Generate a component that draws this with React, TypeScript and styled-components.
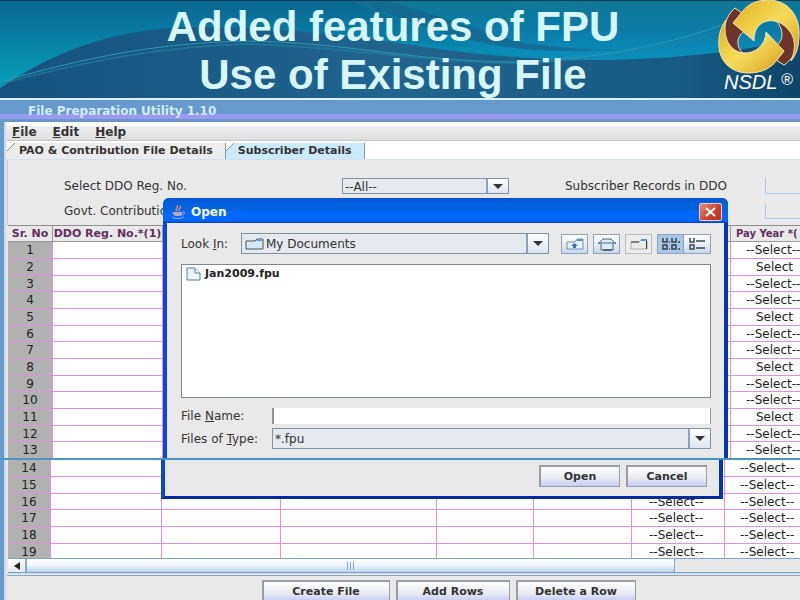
import React from 'react';
import styled, { createGlobalStyle, css } from 'styled-components';

const GlobalStyle = createGlobalStyle`
  *, *::before, *::after { box-sizing: border-box; }
  body { margin: 0; background: #e9e9e9; }
  button, input, select { font: inherit; color: inherit; }
`;

const uiFont = '"DejaVu Sans", sans-serif';

const Page = styled.div`
  height: 100vh;
  display: flex;
  flex-direction: column;
  overflow: hidden;
  background: #e9e9e9;
  color: #333;
  font: 12px/14px ${uiFont};
`;

/* ---------- Slide header ---------- */

const Banner = styled.header`
  display: grid;
  flex: none;
  height: 100px;
  overflow: hidden;
  border-bottom: 2px solid #d9f2fb;
  background: #1b5f8c;
  > * { grid-area: 1 / 1; min-width: 0; }
`;

const Waves = styled.svg`
  display: block;
  width: 100%;
  height: 98px;
`;

const BannerTitle = styled.h1`
  margin: 0;
  padding: 3px 14px 0 0;
  text-align: center;
  color: #d7f7ff;
  font: bold 42px/48px "Liberation Sans", sans-serif;
`;

const Brand = styled.div`
  justify-self: end;
  width: 84px;
  color: #fff;
  font: italic 20px/16px "Liberation Sans", sans-serif;
`;

const BrandMark = styled.svg`
  display: block;
  width: 84px;
  height: 74px;
`;

const BrandName = styled.div`
  display: flex;
  gap: 4px;
  padding: 0 0 0 8px;
  sup { font: 16px/12px "Liberation Sans", sans-serif; }
`;

/* ---------- Application frame ---------- */

const Pane = styled.section<{ $grow?: boolean }>`
  position: relative;
  flex: ${p => (p.$grow ? '1' : 'none')};
  height: ${p => (p.$grow ? 'auto' : '360px')};
  display: flex;
  flex-direction: column;
  overflow: hidden;
  border-bottom: ${p => (p.$grow ? '0' : '2px solid #4d92c0')};
`;

const TitleBar = styled.div`
  flex: none;
  height: 22px;
  padding: 4px 28px 0;
  background: linear-gradient(#6699cc 14px, #9a9af2 14px, #9a9af2 19px, #6a96cc 19px);
  color: #d3ecff;
  font-weight: bold;
`;

const Body = styled.div`
  flex: 1;
  min-height: 0;
  display: flex;
  flex-direction: column;
  border-left: 4px solid #689acb;
  box-shadow: inset 2px 0 0 #c9dcee;
  padding-left: 3px;
`;

const MenuBar = styled.nav`
  display: flex;
  flex: none;
  gap: 16px;
  height: 19px;
  padding: 2px 5px 0;
  border-bottom: 1px solid #c8c8c8;
  background: linear-gradient(#fff 4px, #f0f0f0 4px, #dedede);
`;

const MenuItem = styled.button`
  padding: 0;
  border: 0;
  background: none;
  font-weight: bold;
  line-height: 14px;
`;

const TabBar = styled.div`
  display: flex;
  flex: none;
  height: 19px;
  padding-top: 2px;
  border-bottom: 1px solid #cfe2ee;
  background: #fff;
`;

const Tab = styled.button<{ $active?: boolean }>`
  padding: 0 12px;
  border: solid #8b98a5;
  border-width: 0 1px 0 0;
  background: ${p =>
    p.$active
      ? 'linear-gradient(135deg, #fff 5px, #7f9db9 5px, #7f9db9 6px, #cbeafc 6px)'
      : 'linear-gradient(135deg, #fff 5px, #888 5px, #888 6px, #ececec 6px)'};
  font-weight: bold;
  font-size: 11px;
  line-height: 14px;
  white-space: nowrap;
`;

const Filters = styled.div`
  display: grid;
  flex: none;
  grid-template-columns: 278px 167px 1fr 35px;
  grid-auto-rows: 16px;
  row-gap: 9px;
  padding: 18px 0 6px 56px;
  border-left: 1px solid #b8cfe4;
  line-height: 16px;
  label { white-space: nowrap; }
  label:nth-of-type(2) { padding-left: 56px; }
`;

const Combo = styled.div<{ $tall?: boolean }>`
  display: flex;
  height: ${p => (p.$tall ? 21 : 16)}px;
  align-items: center;
  border: 1px solid #7d93a8;
  background: #e6e9ed;
  select {
    appearance: none;
    flex: 1;
    min-width: 0;
    height: 100%;
    padding: 0 2px;
    border: 0;
    background: transparent;
  }
  > svg:first-child { flex: none; margin-left: 3px; }
`;

const Arrow = styled.span`
  display: grid;
  place-items: center;
  flex: none;
  width: 22px;
  height: 100%;
  border-left: 2px solid #8aa2bb;
  background: linear-gradient(#fff, #dce5f0);
  pointer-events: none;
  &::before {
    content: '';
    border: 5px solid transparent;
    border-top-color: #333;
    border-bottom: 0;
  }
`;

const CountField = styled.input`
  width: 100%;
  min-width: 0;
  border: solid #a9c9e9;
  border-width: 0 0 1px 1px;
  background: #e9e9e9;
`;

/* ---------- Records table ---------- */

const Viewport = styled.div`
  flex: 1;
  min-height: 0;
  overflow: hidden;
  padding-left: 1px;
`;

const Grid = styled.table`
  width: 100%;
  table-layout: fixed;
  border-collapse: separate;
  border-spacing: 0;
  background: #fff;
  color: #222;
  th, td {
    height: 17px;
    padding: 0;
    overflow: hidden;
    white-space: nowrap;
    line-height: 14px;
    border-right: 1px solid #ea8bea;
    border-bottom: 1px solid #dd94dd;
  }
  tbody tr:nth-child(3n) > * { height: 16px; }
  tbody th {
    background: #b1b1b1;
    font-weight: normal;
    text-align: center;
  }
  td:last-child { border-right: 0; }
  thead th {
    border-top: 1px solid #8e8e8e;
    border-right: 1px solid #999;
    border-bottom: 1px solid #999;
    background: #e9e9e9;
    color: #603060;
    font-size: 11px;
  }
  thead th:last-child { padding-left: 5px; text-align: left; border-right: 0; font-size: 10px; }
`;

const Choice = styled.td<{ $indent: number }>`
  && { padding-left: ${p => p.$indent}px; }
`;

const ScrollBar = styled.div`
  display: flex;
  flex: none;
  height: 15px;
  margin-left: 1px;
  border: solid #7fa3c8;
  border-width: 1px 0;
  background: #e8e8e8;
`;

const ScrollButton = styled.button`
  display: grid;
  place-items: center;
  width: 18px;
  padding: 0;
  border: 0;
  border-right: 1px solid #8ea6c0;
  background: linear-gradient(#fff, #e2e7ee);
`;

const Thumb = styled.div`
  display: grid;
  place-items: center;
  flex: 0 0 82%;
  border: solid #7ca7d2;
  border-width: 0 1px;
  background: linear-gradient(#fff, #eef5fc 50%, #b9d2ec);
`;

const Actions = styled.footer`
  display: flex;
  flex: none;
  justify-content: center;
  gap: 6px;
  height: 24px;
  padding: 4px 0 0 90px;
`;

const ActionsRule = styled.div`
  flex: none;
  height: 3px;
  border-top: 1px solid #c6dced;
  border-bottom: 1px solid #8ea6b8;
`;

const PushButton = styled.button<{ $width: number }>`
  flex: none;
  width: ${p => p.$width}px;
  height: 22px;
  padding: 0;
  border: 2px solid #9a9da3;
  border-right-width: 1px;
  border-bottom-width: 1px;
  background: linear-gradient(#fdfdfd, #e9ebf2 60%, #c4ccf5);
  font-weight: bold;
  font-size: 11px;
  line-height: 18px;
`;

/* ---------- Open dialog ---------- */

const dialogEdge = css`
  border: solid #0a48cf;
  background: #e9e9e9;
`;

const Dialog = styled.div`
  ${dialogEdge}
  position: absolute;
  top: 98px;
  bottom: 0;
  left: 163px;
  right: 72px;
  border-width: 0 4px;
  border-right-color: #0732b4;
  border-radius: 6px 6px 0 0;
`;

const DialogFoot = styled.div`
  ${dialogEdge}
  position: absolute;
  top: 0;
  left: 161px;
  right: 77px;
  display: flex;
  justify-content: flex-end;
  gap: 6px;
  padding: 5px 12px 9px;
  border-width: 0 4px 3px;
  border-bottom-color: #0828a0;
  border-right-color: #0732b4;
`;

const DialogTitle = styled.div`
  display: flex;
  align-items: center;
  height: 25px;
  margin: 0 -4px;
  padding: 2px 6px 0 8px;
  border-radius: 6px 6px 0 0;
  background: linear-gradient(#0a4fd0, #0262e0 5px, #0462dc 12px, #0068ff 14px, #0066fb 23px, #0038b8);
  color: #fff;
  font-weight: bold;
  span { flex: 1; padding-left: 5px; }
`;

const CloseButton = styled.button`
  display: grid;
  place-items: center;
  width: 23px;
  height: 18px;
  padding: 0;
  border: 1px solid #f3c9c0;
  border-radius: 2px;
  background: linear-gradient(135deg, #e88a78, #c9402c 60%, #b83420);
`;

const DialogBody = styled.div`
  padding: 10px 13px 0 14px;
`;

const LookRow = styled.div`
  display: grid;
  grid-template-columns: 60px 1fr auto;
  align-items: center;
  height: 21px;
`;

const Tools = styled.div`
  display: flex;
  gap: 5px;
  padding-left: 12px;
`;

const ToolButton = styled.button<{ $pressed?: boolean; $flat?: boolean }>`
  display: grid;
  place-items: center;
  width: 27px;
  height: 20px;
  padding: 0;
  border: 1px solid ${p => (p.$flat ? '#bbb' : '#8ea3b9')};
  background: ${p => (p.$pressed ? '#a9c8e8' : p.$flat ? '#ececec' : 'linear-gradient(#fff, #e8edf4 55%, #c8d8ec)')};
`;

const ToolPair = styled.div`
  display: flex;
  ${ToolButton}:last-child { border-left: 0; }
`;

const FileList = styled.ul`
  height: 134px;
  margin: 10px 0;
  padding: 2px 4px;
  border: 1px solid #7f868d;
  background: #fff;
  list-style: none;
`;

const FileEntry = styled.li`
  display: flex;
  align-items: center;
  gap: 4px;
  color: #222;
  font-weight: bold;
  font-size: 11px;
`;

const Field = styled.div<{ $gap?: boolean }>`
  display: grid;
  grid-template-columns: 91px 1fr;
  align-items: center;
  margin-bottom: ${p => (p.$gap ? 4 : 0)}px;
`;

const NameInput = styled.input`
  width: 100%;
  min-width: 0;
  height: 16px;
  border: solid #8c959e;
  border-width: 0 1px;
  border-left-width: 2px;
  background: #fff;
`;

/* ---------- Drawings ---------- */

const HeaderWaves = () => (
  <Waves viewBox="0 0 800 98" preserveAspectRatio="none" aria-hidden="true">
    <defs>
      <linearGradient id="sky" x1="0" y1="0" x2="0" y2="1">
        <stop offset="0" stopColor="#0a6690" />
        <stop offset=".35" stopColor="#087da3" />
        <stop offset=".8" stopColor="#069ab3" />
      </linearGradient>
      <linearGradient id="crest" x1="0" y1="0" x2="0" y2="1">
        <stop offset="0" stopColor="#0f7795" />
        <stop offset=".5" stopColor="#0b7ca8" />
        <stop offset="1" stopColor="#0b91bd" />
      </linearGradient>
      <linearGradient id="deep" x1="0" y1="0" x2="1" y2="0">
        <stop offset="0" stopColor="#14517f" />
        <stop offset=".5" stopColor="#21658f" />
        <stop offset=".85" stopColor="#175a83" />
        <stop offset="1" stopColor="#0e4569" />
      </linearGradient>
    </defs>
    <rect width="800" height="98" fill="url(#sky)" />
    <path d="M350 0H800V42C720 58 620 66 530 58C470 50 410 26 350 0Z" fill="url(#crest)" />
    <path d="M350 0H385C430 14 470 26 510 40C550 49 610 51 650 49C590 55 520 52 470 40C425 29 390 14 350 0Z" fill="#17678e" opacity=".8" />
    <path d="M0 88C60 48 120 27 200 27C320 27 410 47 490 55C590 64 690 62 800 39V98H0Z" fill="url(#deep)" />
    <path d="M370 37C450 50 560 56 740 44C610 68 480 60 370 37Z" fill="#0a8db8" opacity=".7" />
    <path d="M0 82C90 56 160 43 245 41C350 42 410 62 520 62C620 57 680 40 725 24" fill="none" stroke="#2c9ab0" strokeWidth="1" />
    <path d="M0 84C90 60 160 47 245 44C350 46 430 64 520 63C620 60 680 44 725 30" fill="none" stroke="#2580a4" strokeWidth="2" opacity=".6" />
    <path d="M0 0H800" stroke="#0b3d59" strokeWidth="2" />
  </Waves>
);

const NsdlMark = () => (
  <BrandMark viewBox="16 0 84 74" aria-hidden="true">
    <defs>
      <linearGradient id="gold" x1="0" y1="0" x2="1" y2="1">
        <stop offset="0" stopColor="#dfae1c" />
        <stop offset=".5" stopColor="#f7dc5c" />
        <stop offset="1" stopColor="#d69c1a" />
      </linearGradient>
    </defs>
    <g stroke="#f2e6b8" strokeWidth="1" strokeLinejoin="round">
      <path d="M35 8L42 13L34 23L45 31C37 35 35 46 43 53C34 54 23 46 24 33C24 22 29 13 35 8Z" fill="#6e332b" />
      <path d="M75 20C86 18 98 30 98 43C97 53 90 61 84 65L76 60L84 51L77 45C84 40 84 28 75 20Z" fill="#6e332b" />
      <path d="M26 20C20 28 18 38 19 47C20 62 32 73 48 73C63 73 72 67 77 60L84 51L66 32C66 45 55 54 43 53C30 51 22 38 26 20Z" fill="url(#gold)" />
      <path d="M33 23L42 12C49 3 58 0 68 0C87 0 99 14 99 33C99 45 97 54 91 61C95 51 96 41 91 33C83 21 71 18 62 23C56 27 54 33 54 41Z" fill="url(#gold)" />
    </g>
  </BrandMark>
);

const FolderIcon = () => (
  <svg width="19" height="14" viewBox="0 0 19 14" aria-hidden="true">
    <path d="M1 12V4H10L12 2H18V12Z" fill="#d7e8f7" stroke="#47545f" />
    <path d="M11 4L13 2H18V4Z" fill="#6fa0cb" />
  </svg>
);

const UpFolderIcon = () => (
  <svg width="18" height="14" viewBox="0 0 18 14" aria-hidden="true">
    <path d="M1 12V5H9L11 2H17V12Z" fill="#e9f2fa" stroke="#7292b0" />
    <path d="M10 4L12 2H17V4Z" fill="#5c96c8" />
    <path d="M5 9L8.500 6L12 9H10V11H7V9Z" fill="#3e73a5" />
  </svg>
);

const HomeIcon = () => (
  <svg width="20" height="14" viewBox="0 0 20 14" aria-hidden="true">
    <path d="M1 7L6 2H14L19 7M4 6V13H16V6M1 6H19" fill="#dcebf7" stroke="#42647f" />
    <path d="M6 13H15" stroke="#25323d" />
  </svg>
);

const NewFolderIcon = () => (
  <svg width="18" height="14" viewBox="0 0 18 14" aria-hidden="true">
    <path d="M1 12V5H9L11 3H17V12H1" fill="none" stroke="#a8afb6" />
    <path d="M1 5H9M16.500 4V12" stroke="#333" />
    <path d="M11 3H17" stroke="#5c96c8" strokeWidth="2" />
  </svg>
);

const TilesIcon = () => (
  <svg width="20" height="14" viewBox="0 0 20 14" aria-hidden="true">
    <path d="M2 1V5H6V1M11 1V5H15V1M2 8V12H6V8ZM11 8V12H15V8ZM8 5H9M17 5H19M8 12H9M17 12H19" fill="none" stroke="#34424f" strokeWidth="1.500" />
  </svg>
);

const DetailsIcon = () => (
  <svg width="18" height="14" viewBox="0 0 18 14" aria-hidden="true">
    <path d="M2 1V5H6V1M2 8V12H6V8ZM8 4H17M8 11H17" fill="none" stroke="#3d4853" strokeWidth="1.500" />
  </svg>
);

const FileIcon = () => (
  <svg width="15" height="14" viewBox="0 0 15 14" aria-hidden="true">
    <path d="M1 1H9L14 6V13H1Z" fill="#eef6fd" stroke="#4f7fa8" />
    <path d="M9 1V6H14" fill="#fff" stroke="#4f7fa8" />
  </svg>
);

const JavaIcon = () => (
  <svg width="15" height="14" viewBox="0 0 15 14" aria-hidden="true">
    <path d="M6 6C3 4 8 3 6 0M8 6C6 4 11 4 9 1" fill="none" stroke="#e8806a" strokeWidth="1.500" />
    <path d="M2 7H11V8C11 11 9 11 7 11S2 11 2 8Z" fill="#b9a7bc" />
    <path d="M11 7C15 6 14 10 10 10M1 12C4 14 10 14 13 12" fill="none" stroke="#aab0d8" />
  </svg>
);

const CrossIcon = () => (
  <svg width="11" height="10" viewBox="0 0 11 10" aria-hidden="true">
    <path d="M1 1L10 9M10 1L1 9" stroke="#fff" strokeWidth="2" />
  </svg>
);

const LeftIcon = () => (
  <svg width="6" height="8" viewBox="0 0 6 8" aria-hidden="true">
    <path d="M6 0V8L0 4Z" fill="#222" />
  </svg>
);

const GripIcon = () => (
  <svg width="7" height="8" viewBox="0 0 7 8" aria-hidden="true">
    <path d="M.5 0V8M3.500 0V8M6.500 0V8" stroke="#7ba6d0" />
  </svg>
);

/* ---------- Data ---------- */

const upperRows = Array.from({ length: 13 }, (_, i) => i + 1);
const lowerRows = Array.from({ length: 6 }, (_, i) => i + 14);

export default function App() {
  return (
    <Page>
      <GlobalStyle />
      <Banner>
        <HeaderWaves />
        <BannerTitle>
          Added features of FPU
          <br />
          Use of Existing File
        </BannerTitle>
        <Brand>
          <NsdlMark />
          <BrandName>
            NSDL<sup>®</sup>
          </BrandName>
        </Brand>
      </Banner>

      <Pane>
        <TitleBar>File Preparation Utility 1.10</TitleBar>
        <Body>
          <MenuBar>
            <MenuItem><u>F</u>ile</MenuItem>
            <MenuItem><u>E</u>dit</MenuItem>
            <MenuItem><u>H</u>elp</MenuItem>
          </MenuBar>
          <TabBar role="tablist">
            <Tab role="tab" aria-selected="false">PAO &amp; Contribution File Details</Tab>
            <Tab role="tab" aria-selected="true" $active>Subscriber Details</Tab>
          </TabBar>
          <Filters>
            <label htmlFor="ddo">Select DDO Reg. No.</label>
            <Combo>
              <select id="ddo"><option>--All--</option></select>
              <Arrow />
            </Combo>
            <label htmlFor="records">Subscriber Records in DDO</label>
            <CountField id="records" />
            <label htmlFor="govt">Govt. Contribution</label>
            <span />
            <span />
            <CountField id="govt" />
          </Filters>
          <Viewport>
            <Grid>
              <colgroup>
                <col style={{ width: 45 }} />
                <col style={{ width: 110 }} />
                <col />
                <col style={{ width: 69 }} />
              </colgroup>
              <thead>
                <tr>
                  <th>Sr. No</th>
                  <th>DDO Reg. No.*(1)</th>
                  <th />
                  <th>Pay Year *(</th>
                </tr>
              </thead>
              <tbody>
                {upperRows.map(n => (
                  <tr key={n}>
                    <th scope="row">{n}</th>
                    <td />
                    <td />
                    {n % 3 === 2 ? <Choice $indent={25}>Select</Choice> : <Choice $indent={15}>--Select--</Choice>}
                  </tr>
                ))}
              </tbody>
            </Grid>
          </Viewport>
        </Body>
        <Dialog role="dialog" aria-label="Open">
          <DialogTitle>
            <JavaIcon />
            <span>Open</span>
            <CloseButton aria-label="Close"><CrossIcon /></CloseButton>
          </DialogTitle>
          <DialogBody>
            <LookRow>
              <label htmlFor="look">Look <u>I</u>n:</label>
              <Combo $tall>
                <FolderIcon />
                <select id="look"><option>My Documents</option></select>
                <Arrow />
              </Combo>
              <Tools>
                <ToolButton aria-label="Up one level"><UpFolderIcon /></ToolButton>
                <ToolButton aria-label="Home"><HomeIcon /></ToolButton>
                <ToolButton aria-label="New folder" $flat><NewFolderIcon /></ToolButton>
                <ToolPair>
                  <ToolButton aria-label="List" $pressed><TilesIcon /></ToolButton>
                  <ToolButton aria-label="Details"><DetailsIcon /></ToolButton>
                </ToolPair>
              </Tools>
            </LookRow>
            <FileList>
              <FileEntry><FileIcon />Jan2009.fpu</FileEntry>
            </FileList>
            <Field $gap>
              <label htmlFor="name">File <u>N</u>ame:</label>
              <NameInput id="name" />
            </Field>
            <Field>
              <label htmlFor="type">Files of <u>T</u>ype:</label>
              <Combo $tall>
                <select id="type"><option>*.fpu</option></select>
                <Arrow />
              </Combo>
            </Field>
          </DialogBody>
        </Dialog>
      </Pane>

      <Pane $grow>
        <Body>
          <Viewport>
            <Grid>
              <colgroup>
                <col style={{ width: 43 }} />
                <col style={{ width: 111 }} />
                <col style={{ width: 119 }} />
                <col style={{ width: 156 }} />
                <col style={{ width: 97 }} />
                <col />
                <col style={{ width: 93 }} />
                <col style={{ width: 75 }} />
              </colgroup>
              <tbody>
                {lowerRows.map(n => (
                  <tr key={n}>
                    <th scope="row">{n}</th>
                    <td />
                    <td />
                    <td />
                    <td />
                    <td />
                    <Choice $indent={17}>{n > 15 ? '--Select--' : null}</Choice>
                    <Choice $indent={15}>--Select--</Choice>
                  </tr>
                ))}
              </tbody>
            </Grid>
          </Viewport>
          <ScrollBar>
            <ScrollButton aria-label="Scroll left"><LeftIcon /></ScrollButton>
            <Thumb><GripIcon /></Thumb>
          </ScrollBar>
          <ActionsRule />
          <Actions>
            <PushButton $width={128}>Create File</PushButton>
            <PushButton $width={114}>Add Rows</PushButton>
            <PushButton $width={120}>Delete a Row</PushButton>
          </Actions>
        </Body>
        <DialogFoot>
          <PushButton $width={81}>Open</PushButton>
          <PushButton $width={81}>Cancel</PushButton>
        </DialogFoot>
      </Pane>
    </Page>
  );
}
